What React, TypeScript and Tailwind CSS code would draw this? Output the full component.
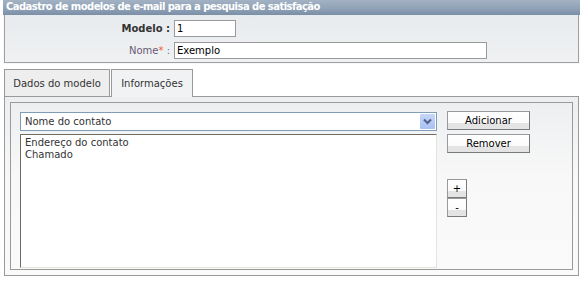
import React from "react"

const font = "font-['DejaVu_Sans',sans-serif]"

function Btn({ label, className = "" }: { label: string; className?: string }) {
  return (
    <button
      className={`relative flex items-center justify-center border border-[#7a7a7a] border-t-[#9a9a9a] border-l-[#9a9a9a] bg-[linear-gradient(to_bottom,#ffffff_0%,#fbfbfb_62%,#e4e4e4_63%,#e4e4e4_100%)] pb-[1px] text-[10px] text-black ${className}`}
    >
      {label}
    </button>
  )
}

export default function App() {
  return (
    <div className={`relative w-[585px] h-[285px] bg-white text-[10px] text-[#333] ${font}`}>
      <div className="ml-[3px] w-[577px] bg-[#f7f8f9] pb-[1px]">
        {/* header */}
        <div className="h-[15px] bg-[linear-gradient(to_bottom,#a3b2c3_0%,#8fa1b6_60%,#7a8ea6_100%)] pl-[3px] text-[10px] font-bold leading-[14px] tracking-[-0.55px] text-white">
          Cadastro de modelos de e-mail para a pesquisa de satisfação
        </div>
        <div className="ml-[1px] mr-[1px] h-[48px] border border-t-0 border-[#a0a0a0] bg-[linear-gradient(to_bottom,#e8ebed,#eff1f3)]">
          <div className="flex items-center pt-[5px]">
            <span className="w-[165px] text-right font-bold text-[#333]">Modelo :</span>
            <div className="ml-[4px] h-[17px] w-[62px] border border-[#9a9a9a] bg-white pl-[2px] leading-[15px] text-black">1</div>
          </div>
          <div className="flex items-center pt-[5px]">
            <span className="w-[165px] text-right text-[#6a5a78]">
              Nome<span className="text-[#f05a2a]">*</span> <span className="text-[#5a7a9a]">:</span>
            </span>
            <div className="ml-[4px] h-[17px] w-[313px] border border-[#9a9a9a] bg-white pl-[2px] leading-[15px] text-black">Exemplo</div>
          </div>
        </div>
      </div>

      {/* tabs */}
      <div className="mt-[5px] ml-[3px] w-[577px]">
        <div className="flex h-[27px] items-end pl-[1px]">
          <div className="flex h-[27px] w-[106px] items-center justify-center border border-b-0 border-[#9a9a9a] bg-[#eeeeee] text-[#333]">
            Dados do modelo
          </div>
          <div className="relative z-10 ml-[1px] -mb-[1px] flex h-[28px] w-[82px] items-center justify-center border border-b-0 border-[#9a9a9a] bg-[#f1f2f3] pb-[1px] text-[#333]">
            Informações
          </div>
        </div>
        <div className="mx-[1px] h-[180px] border border-[#9a9a9a] bg-[linear-gradient(to_bottom,#eceef0,#f8f8f8_45%,#fafafa)] p-[5px]">
          <div className="flex h-[168px] border border-[#9a9a9a] pl-[9px] pt-[9px]">
            <div className="flex w-[417px] flex-col">
              <div className="flex h-[19px] items-center border border-[#7f9db9] bg-white pl-[4px] text-[#333]">
                <span className="flex-1">Nome do contato</span>
                <div className="mr-[1px] flex h-[15px] w-[15px] items-center justify-center rounded-[1px] bg-[linear-gradient(to_bottom,#c6d6fb,#a9c0f2)]">
                  <svg width="9" height="7" viewBox="0 0 9 7">
                    <path d="M1 1.5 L4.5 5 L8 1.5" fill="none" stroke="#4d6185" strokeWidth="2" />
                  </svg>
                </div>
              </div>
              <div className="mt-[3px] h-[134px] border border-[#e4e4dc] border-t-[#6f6c62] border-l-[#6f6c62] bg-white pl-[4px] pt-[2px] leading-[12px] text-[#333]">
                <div>Endereço do contato</div>
                <div>Chamado</div>
              </div>
            </div>
            <div className="-mt-[1px] ml-[10px] flex flex-col">
              <Btn label="Adicionar" className="h-[19px] w-[83px]" />
              <Btn label="Remover" className="mt-[4px] h-[19px] w-[83px]" />
              <Btn label="+" className="mt-[26px] h-[19px] w-[20px]" />
              <Btn label="-" className="h-[19px] w-[20px]" />
            </div>
          </div>
        </div>
      </div>
    </div>
  )
}
